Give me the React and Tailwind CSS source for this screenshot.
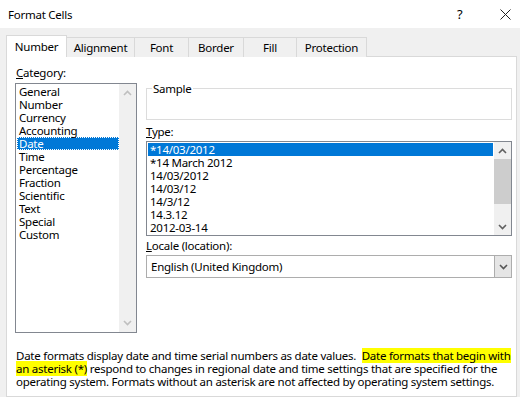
import React from "react";

const categories = ["General", "Number", "Currency", "Accounting", "Date", "Time", "Percentage", "Fraction", "Scientific", "Text", "Special", "Custom"];
const types = ["*14/03/2012", "*14 March 2012", "14/03/2012", "14/03/12", "14/3/12", "14.3.12", "2012-03-14"];
const tabs = [
    { name: "Number", w: "w-[61px]" },
    { name: "Alignment", w: "w-[68px]" },
    { name: "Font", w: "w-[54px]" },
    { name: "Border", w: "w-[55px]" },
    { name: "Fill", w: "w-[53px]" },
    { name: "Protection", w: "w-[70px]" },
];

function Chevron({ up, color }) {
    return (
        <svg width="9" height="6" viewBox="0 0 9 6">
            <polyline
                points={up ? "1,5 4.5,1.5 8,5" : "1,1 4.5,4.5 8,1"}
                fill="none"
                stroke={color}
                strokeWidth="1.6"
            />
        </svg>
    );
}

export default function App() {
    return (
        <div className="w-[520px] h-[397px] overflow-hidden bg-[#f0f0f0] text-black text-[11.5px] leading-[13px] tracking-[-0.25px]" style={{ fontFamily: '"Noto Sans", "Segoe UI", sans-serif' }}>
            {/* title bar */}
            <div className="h-[28px] bg-white flex items-center pl-[8px]">
                <span className="flex-1">Format Cells</span>
                <span className="text-[13px] w-[10px]">?</span>
                <svg className="ml-[33px] mr-[9px] shrink-0" width="11" height="11" viewBox="0 0 11 11">
                    <path d="M0.5 0.5 L10.5 10.5 M10.5 0.5 L0.5 10.5" stroke="#222" strokeWidth="1" />
                </svg>
            </div>

            {/* tabs */}
            <div className="h-[29px] pl-[6px] flex items-end relative z-10 -mb-px">
                {tabs.map((t, i) => (
                    <div
                        key={t.name}
                        className={
                            i === 0
                                ? `${t.w} h-[22px] bg-white border border-b-0 border-[#d9d9d9] flex items-start justify-center pt-[4px]`
                                : `${t.w} h-[20px] bg-[#f0f0f0] border border-l-0 border-b-0 border-[#d9d9d9] flex items-start justify-center pt-[3px]`
                        }
                    >
                        {t.name}
                    </div>
                ))}
            </div>

            {/* panel */}
            <div className="ml-[6px] w-[511px] h-[341px] bg-white border border-[#d9d9d9] pt-[9px] pl-[8px]">
                <div className="flex gap-[9px]">
                    {/* category */}
                    <div className="w-[122px]">
                        <div className="h-[13px] mb-[4px] pl-[1px]"><span className="underline">C</span>ategory:</div>
                        <div className="h-[250px] border border-[#828790] flex">
                            <div className="flex-1 pt-[1px] pl-[1px]">
                                {categories.map((c) => (
                                    <div
                                        key={c}
                                        className={
                                            c === "Date"
                                                ? "h-[13px] pl-[1px] bg-[#0078d7] text-white border border-dotted border-[#ffffff] leading-[11px]"
                                                : "h-[13px] pl-[2px]"
                                        }
                                    >
                                        {c}
                                    </div>
                                ))}
                            </div>
                            <div className="w-[17px] bg-[#f0f0f0] flex flex-col justify-between items-center py-[6px]">
                                <Chevron up color="#bfbfbf" />
                                <Chevron color="#bfbfbf" />
                            </div>
                        </div>
                    </div>

                    {/* right column */}
                    <div className="w-[366px]">
                        <fieldset className="mt-[16px] h-[38px] border border-[#dcdcdc] px-[5px]">
                            <legend className="px-[1px] leading-[13px]">Sample</legend>
                        </fieldset>

                        <div className="mt-[5px] h-[13px] mb-[3px]"><span className="underline">T</span>ype:</div>
                        <div className="h-[95px] border border-[#828790] flex">
                            <div className="flex-1 p-[1px]">
                                {types.map((t, i) => (
                                    <div key={t} className={i === 0 ? "h-[13px] pl-[2px] bg-[#0078d7] text-white" : "h-[13px] pl-[2px]"}>
                                        {t}
                                    </div>
                                ))}
                            </div>
                            <div className="w-[17px] bg-[#f0f0f0] flex flex-col">
                                <div className="h-[17px] flex items-center justify-center"><Chevron up color="#606060" /></div>
                                <div className="h-[45px] bg-[#cdcdcd]" />
                                <div className="flex-1" />
                                <div className="h-[17px] flex items-center justify-center"><Chevron color="#606060" /></div>
                            </div>
                        </div>

                        <div className="mt-[3px] h-[13px] mb-[3px]"><span className="underline">L</span>ocale (location):</div>
                        <div className="h-[23px] border border-[#adadad] flex">
                            <div className="flex-1 flex items-center pl-[4px]">English (United Kingdom)</div>
                            <div className="w-[17px] bg-[#e5e5e5] border-l border-[#adadad] flex items-center justify-center">
                                <Chevron color="#555" />
                            </div>
                        </div>
                    </div>
                </div>

                <p className="mt-[16px] pl-[1px] leading-[13px] whitespace-nowrap">
                    Date formats display date and time serial numbers as date values.{"\u00a0 "}
                    <span className="bg-[#ffff00]">Date formats that begin with</span>
                    <br />
                    <span className="bg-[#ffff00]">an asterisk (*)</span> respond to changes in regional date and time settings that are specified for the
                    <br />
                    operating system. Formats without an asterisk are not affected by operating system settings.
                </p>
            </div>
        </div>
    );
}
